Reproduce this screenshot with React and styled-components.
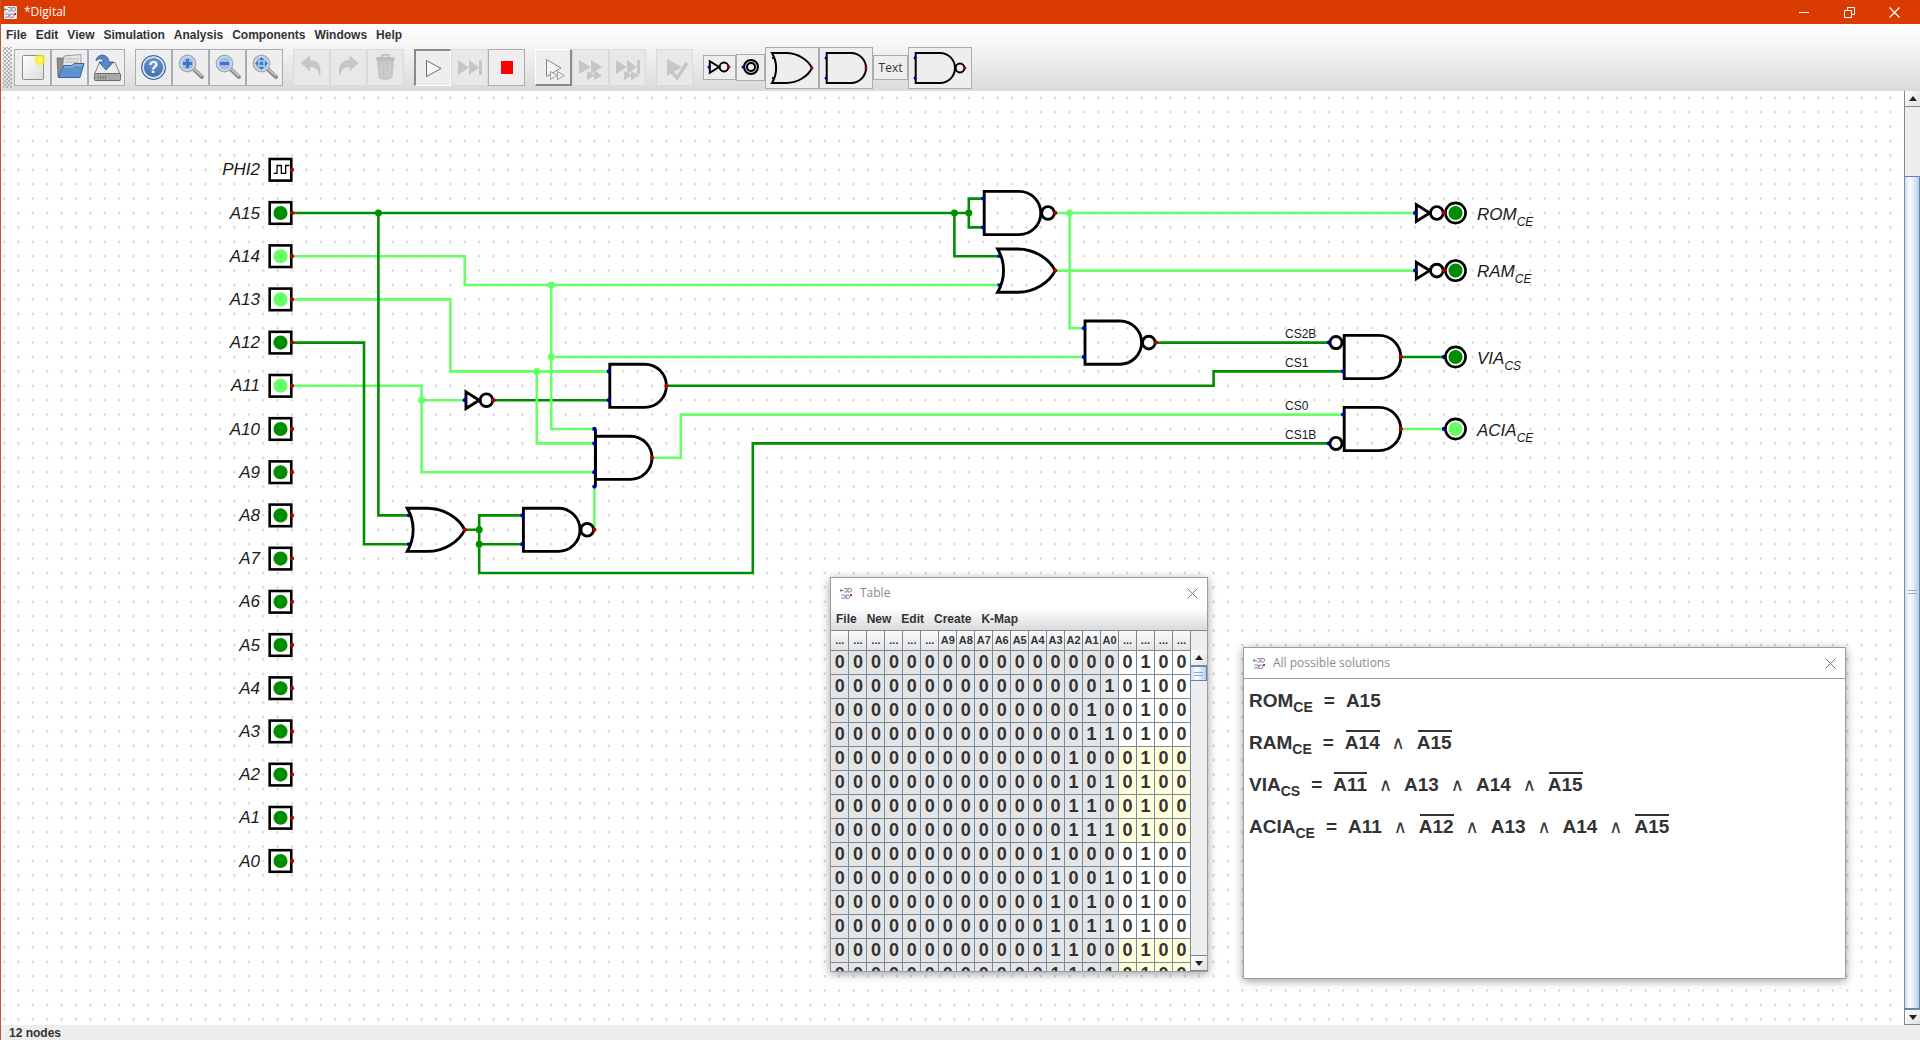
import React from "react";
import styled, { createGlobalStyle, css } from "styled-components";

const SANS = '"Liberation Sans", Arial, sans-serif';
const CAPTION = '"Open Sans", "Noto Sans", sans-serif';
const DARK = "#008e00";
const LIGHT = "#66ff66";

const GlobalStyle = createGlobalStyle`
  *, *::before, *::after { box-sizing: border-box; }
  html, body, #root { height: 100%; }
  body { margin: 0; font-family: ${SANS}; color: #333; overflow: hidden; }
  button { font: inherit; color: inherit; padding: 0; margin: 0; border: 0; background: none; }
`;

const AppFrame = styled.div`
  display: flex;
  flex-direction: column;
  height: 100vh;
  border-left: 1px solid #c4522c;
  background: #eee;
`;

const TitleBar = styled.header`
  display: flex;
  align-items: center;
  flex: none;
  height: 24px;
  padding: 0 3px;
  background: #da3b01;
  color: #fff;
  font: 12px/24px ${CAPTION};
`;

const Title = styled.h1`
  flex: 1;
  margin: 0 0 0 7px;
  font: inherit;
`;

const CaptionButton = styled.button`
  display: grid;
  place-items: center;
  width: 45px;
  height: 24px;
`;

const TopArea = styled.div`
  flex: none;
  height: 67px;
  background: linear-gradient(#ffffff, #f4f4f4 35%, #dadada);
`;

const MenuBar = styled.nav`
  display: flex;
  gap: ${(p) => p.$gap || 9}px;
  height: 22px;
  padding-left: 5px;
  ${(p) =>
    p.$shaded &&
    css`
      background: linear-gradient(#ffffff, #dadada);
    `}
`;

const MenuItem = styled.button`
  font: bold 12px/21px ${SANS};
  color: #333;
`;

const Toolbar = styled.div`
  display: flex;
  align-items: center;
  height: 43px;
  padding-left: 2px;
  gap: 10px;
`;

const Grip = styled.div`
  width: 9px;
  height: 41px;
  margin-right: -8px;
  background-image: radial-gradient(circle, #b4b4b4 1px, transparent 1px),
    radial-gradient(circle, #b4b4b4 1px, transparent 1px);
  background-size: 4px 4px;
  background-position: 0 0, 2px 2px;
`;

const Group = styled.div`
  display: flex;
  align-items: center;
`;

const ToolButton = styled.button`
  display: grid;
  place-items: center;
  width: ${(p) => p.$w || 37}px;
  height: ${(p) => p.$h || 37}px;
  background: #eeeeee;
  border: 1px solid #a9adb2;
  font: 12px/20px ${CAPTION};
  &:disabled {
    border-color: #dadada;
    background: #e8e8e8;
  }
  ${(p) =>
    p.$pressed &&
    css`
      border-color: #8a8a8a #fff #fff #8a8a8a;
      border-width: 2px 1px 1px 2px;
    `}
  ${(p) =>
    p.$raised &&
    css`
      border-color: #fff #8a8a8a #8a8a8a #fff;
      border-width: 1px 2px 2px 1px;
    `}
  svg {
    display: block;
  }
`;

const Workspace = styled.main`
  display: flex;
  flex: 1;
  min-height: 0;
`;

const Canvas = styled.section`
  position: relative;
  flex: 1;
  min-width: 0;
  overflow: hidden;
  background: #fff;
`;

const Drawing = styled.svg`
  display: block;
  width: 100%;
  height: 100%;
`;

const ScrollTrack = styled.div`
  display: flex;
  flex-direction: column;
  flex: none;
  width: 16px;
  border-left: 1px solid #7a8a99;
  background: #eeeeee;
`;

const ScrollButton = styled.button`
  display: grid;
  place-items: center;
  height: 16px;
  background: linear-gradient(135deg, #fff, #e2e2e2);
  border: solid #7a8a99;
  border-width: ${(p) => (p.$down ? "1px 0 1px 0" : "0 0 1px 0")};
`;

const ScrollSpace = styled.div`
  flex: ${(p) => p.$grow || 0};
`;

const Thumb = styled.div`
  display: grid;
  place-items: center;
  flex: ${(p) => (p.$grow ? p.$grow : "0 0 15px")};
  border: 1px solid #6382bf;
  background: linear-gradient(90deg, #c8dcf4, #ffffff 35%, #eaf2fb 55%, #b8cfe5);
  border-left-width: 0;
  &::after {
    content: "";
    width: 9px;
    height: 4px;
    border: solid #8fa8d4;
    border-width: 1px 0;
  }
`;

const StatusBar = styled.footer`
  flex: none;
  height: 15px;
  padding-left: 8px;
  background: #eeeeee;
  font: bold 12px/17px ${SANS};
`;

const FloatWindow = styled.section`
  position: absolute;
  left: ${(p) => p.$x}px;
  top: ${(p) => p.$y}px;
  display: flex;
  flex-direction: column;
  width: ${(p) => p.$w}px;
  height: ${(p) => p.$h}px;
  border: 1px solid #9a9da3;
  background: #fff;
  box-shadow: 0 2px 9px rgba(0, 0, 0, 0.38);
`;

const WindowTitle = styled.header`
  display: flex;
  align-items: center;
  flex: none;
  height: 30px;
  padding: 0 9px;
  gap: 7px;
  color: #8a8a8a;
  h2 {
    flex: 1;
    margin: 0;
    font: 12px/30px ${CAPTION};
  }
`;

const CloseButton = styled.button`
  display: grid;
  place-items: center;
  width: 12px;
  height: 12px;
`;

const TableArea = styled.div`
  display: flex;
  flex: 1;
  min-height: 0;
  overflow: hidden;
  border-top: 1px solid #7a8a99;
`;

const TruthTable = styled.table`
  flex: none;
  align-self: flex-start;
  width: 360px;
  border-collapse: collapse;
  table-layout: fixed;
`;

const HeadCell = styled.th`
  height: 19px;
  padding: 0;
  border-right: 1px solid #7a8a99;
  border-bottom: 1px solid #7a8a99;
  background: linear-gradient(#fafafa, #e4e4e4);
  font: bold 11px/17px ${SANS};
  white-space: nowrap;
`;

const Bit = styled.td`
  height: 24px;
  padding: 0;
  border-right: 1px solid #7a8a99;
  border-bottom: 1px solid #7a8a99;
  background: ${(p) => p.$bg};
  text-align: center;
  font: bold 18px/23px ${SANS};
`;

const TableScroll = styled(ScrollTrack)`
  width: 16px;
  padding-top: 19px;
  border-left: 0;
`;

const Solutions = styled.div`
  display: flex;
  flex-direction: column;
  flex: 1;
  padding: 1px 5px;
  border-top: 1px solid #9a9da3;
`;

const Equation = styled.div`
  display: flex;
  align-items: baseline;
  height: 42px;
  font: bold 19px/42px ${SANS};
  sub {
    position: relative;
    top: 5px;
    vertical-align: baseline;
    font-size: 14px;
    line-height: 1;
  }
`;

const Equals = styled.span`
  padding: 0 11px;
`;

const Term = styled.span`
  position: relative;
  &::before {
    content: "";
    position: absolute;
    left: 1px;
    right: 0;
    top: 8px;
    border-top: ${(p) => (p.$not ? "2px solid #333" : "0")};
  }
`;

const Wedge = styled.span`
  width: 37px;
  text-align: center;
  font: 18px/1 "DejaVu Sans", sans-serif;
`;

/* ---------- circuit symbols, one unit = one grid step ---------- */

const Pin = ({ x, y, out }) => <circle cx={x} cy={y} r={0.15} fill={out ? "#b20000" : "#0000b2"} />;

const Body = ({ children }) => (
  <g fill="none" stroke="#000" strokeWidth={0.2}>
    {children}
  </g>
);

function AndGate({ x, y, inverted, pins = [-1, 1], invertedPin, wide }) {
  return (
    <g transform={`translate(${x} ${y})`}>
      <Body>
        <path d="M0.07 -1.5H2.5A1.5 1.5 0 0 1 2.5 1.5H0.07Z" />
        {wide && <path d="M0.07 -2V2" />}
        {inverted && <circle cx={4.5} cy={0} r={0.44} />}
        {invertedPin && <circle cx={-0.5} cy={invertedPin} r={0.42} />}
      </Body>
      {pins.map((p) => (
        <Pin key={p} x={p === invertedPin ? -1 : 0} y={p} />
      ))}
      <Pin out x={inverted ? 5 : 4} y={0} />
    </g>
  );
}

function OrGate({ x, y }) {
  return (
    <g transform={`translate(${x} ${y})`}>
      <path d="M0 -1H0.3M0 1H0.3" stroke="#0000b2" strokeWidth={0.22} />
      <Body>
        <path d="M0 -1.5H1.4C2.6 -1.5 3.6 -0.8 4 0C3.6 0.8 2.6 1.5 1.4 1.5H0C0.55 0.6 0.55 -0.6 0 -1.5Z" />
      </Body>
      <Pin out x={4} y={0} />
    </g>
  );
}

function NotGate({ x, y }) {
  return (
    <g transform={`translate(${x} ${y})`}>
      <Body>
        <path d="M0.08 -0.58V0.58L1 0Z" />
        <circle cx={1.5} cy={0} r={0.44} />
      </Body>
      <Pin x={0} y={0} />
      <Pin out x={2} y={0} />
    </g>
  );
}

function Source({ y, color }) {
  return (
    <g transform={`translate(0 ${y})`}>
      <rect x={-1.55} y={-0.75} width={1.5} height={1.5} fill="#fff" stroke="#000" strokeWidth={0.18} />
      {color ? (
        <circle cx={-0.8} cy={0} r={0.49} fill={color} />
      ) : (
        <path d="M-1.27 0.25H-1.04V-0.3H-0.74V0.25H-0.44V-0.3H-0.18" fill="none" stroke="#000" strokeWidth={0.09} />
      )}
      <Pin out x={0} y={0} />
    </g>
  );
}

function Lamp({ x, y, color }) {
  return (
    <g>
      <circle cx={x + 0.8} cy={y} r={0.7} fill="#fff" stroke="#000" strokeWidth={0.18} />
      <circle cx={x + 0.8} cy={y} r={0.49} fill={color} />
    </g>
  );
}

const INPUTS = ["PHI2", "A15", "A14", "A13", "A12", "A11", "A10", "A9", "A8", "A7", "A6", "A5", "A4", "A3", "A2", "A1", "A0"];
const HIGH = ["A14", "A13", "A11"];
const OUTPUTS = [
  ["ROM", "CE", 0, DARK],
  ["RAM", "CE", 4, DARK],
  ["VIA", "CS", 10, DARK],
  ["ACIA", "CE", 15, LIGHT],
];
const NET_LABELS = [
  ["CS2B", 9],
  ["CS1", 11],
  ["CS0", 14],
  ["CS1B", 16],
];
const STEP = 14.4;
const ORIGIN_X = 291;
const ORIGIN_Y = 122;
const px = (u) => Math.floor(ORIGIN_X + u * STEP);
const py = (u) => Math.floor(ORIGIN_Y + u * STEP);

const LIGHT_WIRES = "M0 3H12V5H49M0 6H11V11H22M0 12H9V18H21M9 13H12M18 10H55M25 17H27V14H73M21 22V19M53 0H78M53 4H78M54 0V8H55M77 15H80";
const DARK_WIRES = "M0 0H47M46 0V3H49M48 -1H47V1H48M6 0V21H8M0 9H5V23H8M14 13H22M26 12H64V11H73M60 9H72M12 22H13M16 21H13V25H32V16H72M13 23H16M77 10H80";
const TOP_WIRES = "M18 5V15H21M17 11V16H21";
const DOTS = [
  [6, 0, DARK], [46, 0, DARK], [47, 0, DARK], [13, 22, DARK], [13, 23, DARK],
  [18, 5, LIGHT], [18, 10, LIGHT], [17, 11, LIGHT], [9, 13, LIGHT], [54, 0, LIGHT],
];

function Circuit() {
  return (
    <Drawing role="img" aria-label="Address decoder circuit">
      <defs>
        <pattern id="grid" x={ORIGIN_X - STEP / 2} y={ORIGIN_Y - STEP / 2} width={STEP} height={STEP} patternUnits="userSpaceOnUse">
          <circle cx={STEP / 2} cy={STEP / 2} r={1.1} fill="#c8c8c8" />
        </pattern>
      </defs>
      <rect width="100%" height="100%" fill="url(#grid)" />
      <g transform={`translate(${ORIGIN_X} ${ORIGIN_Y}) scale(${STEP})`}>
        <g fill="none" strokeWidth={0.18} strokeLinecap="square">
          <path d={LIGHT_WIRES} stroke={LIGHT} />
          <path d={DARK_WIRES} stroke={DARK} />
          <path d={TOP_WIRES} stroke={LIGHT} />
        </g>
        {DOTS.map(([x, y, c]) => (
          <circle key={`${x},${y}`} cx={x} cy={y} r={0.24} fill={c} />
        ))}
        {INPUTS.map((name, i) => (
          <Source key={name} y={i * 3 - 3} color={i === 0 ? null : HIGH.includes(name) ? LIGHT : DARK} />
        ))}
        <AndGate x={48} y={0} inverted />
        <OrGate x={49} y={4} />
        <AndGate x={55} y={9} inverted />
        <AndGate x={22} y={12} />
        <NotGate x={12} y={13} />
        <AndGate x={21} y={17} pins={[-2, -1, 1, 2]} wide />
        <OrGate x={8} y={22} />
        <AndGate x={16} y={22} inverted />
        <AndGate x={73} y={10} invertedPin={-1} />
        <AndGate x={73} y={15} invertedPin={1} />
        <Pin x={80} y={10} />
        <Pin x={80} y={15} />
        {OUTPUTS.map(([n, , y, c]) => (
          <Lamp key={n} x={80} y={y} color={c} />
        ))}
        <NotGate x={78} y={0} />
        <NotGate x={78} y={4} />
      </g>
      <g fontFamily={SANS} fill="#1a1a1a">
        <g fontSize="17px" fontStyle="italic">
          {INPUTS.map((name, i) => (
            <text key={name} x={259} y={py(i * 3 - 3) + 6} textAnchor="end">
              {name}
            </text>
          ))}
          {OUTPUTS.map(([name, sub, y]) => (
            <text key={name} x={1476} y={py(y) + 7}>
              {name}
              <tspan dy={6} fontSize="12px">
                {sub}
              </tspan>
            </text>
          ))}
        </g>
        <g fontSize="12px">
          {NET_LABELS.map(([name, y]) => (
            <text key={name} x={px(69)} y={py(y) - 4}>
              {name}
            </text>
          ))}
        </g>
      </g>
    </Drawing>
  );
}

/* ---------- icons ---------- */

const Icon = ({ children, label }) => (
  <svg width={35} height={35} viewBox="1 1 35 35" aria-label={label}>
    {children}
  </svg>
);

const AppLogo = ({ plate }) => (
  <svg width={13} height={13} viewBox="0 0 13 13" aria-hidden="true">
    {plate && <rect width={13} height={13} rx={1} fill="#f3eef0" />}
    <g fill="none" stroke="#8f84b4" strokeWidth={1}>
      <path d="M4 1.5H7V5H4M8 1.5H10A1.7 1.7 0 0 1 10 5H8ZM1 8H5V11H1M6 8H8A1.5 1.5 0 0 1 8 11.5H6Z" />
      <path d="M1 3.5H4M5 9.5H6" />
    </g>
    <path d="M0 2.5H2V4.5H0Z" fill="#46a05a" />
    <path d="M10 7H12V9H10Z" fill="#cc2936" />
  </svg>
);

const Magnifier = ({ label, children }) => (
  <Icon label={label}>
    <path d="M22 20.5L30 28" stroke="#8a8a8a" strokeWidth={4} strokeLinecap="round" />
    <path d="M22 20L29.5 26.5" stroke="#cccccc" strokeWidth={1.6} strokeLinecap="round" />
    <circle cx={15.5} cy={14.5} r={8.2} fill="#a8c6e8" stroke="#a3aab0" strokeWidth={1.4} />
    <circle cx={15.5} cy={14.5} r={6.8} fill="#9dbfe6" stroke="#e4eef8" strokeWidth={1} />
    <g fill="#3f76b8" stroke="#3f76b8">{children}</g>
  </Icon>
);

const NewIcon = () => (
  <Icon label="New">
    <defs>
      <linearGradient id="page" x1="0" y1="0" x2="1" y2="1">
        <stop offset="0" stopColor="#ffffff" />
        <stop offset="1" stopColor="#dcdcdc" />
      </linearGradient>
      <radialGradient id="spark">
        <stop offset="0" stopColor="#ffffc8" />
        <stop offset="0.5" stopColor="#f8f020" />
        <stop offset="1" stopColor="#f5ec3c" stopOpacity="0.15" />
      </radialGradient>
    </defs>
    <rect x={8.5} y={6.5} width={21} height={24} rx={1} fill="url(#page)" stroke="#8c8c8c" />
    <circle cx={26} cy={11} r={6.5} fill="url(#spark)" />
  </Icon>
);

const OpenIcon = () => (
  <Icon label="Open">
    <path d="M7 28L6 9H13L15 7H25V26Z" fill="#8b8d8a" stroke="#666" strokeWidth={0.8} />
    <path d="M11 22L13 7L30 5.5V20Z" fill="#e6e6e6" stroke="#8a8a8a" strokeWidth={0.8} />
    <path d="M14 10H28M14 13H28" stroke="#b5b5b5" />
    <path d="M7.5 28.5L12.5 16.5H21L23 14.5H33L29 28.5Z" fill="#5d92cd" stroke="#3465a4" />
    <path d="M13.5 18H21.5L23.5 16H31.5" fill="none" stroke="#a6c6ea" />
  </Icon>
);

const SaveIcon = () => (
  <Icon label="Save">
    <path d="M11.5 13.5H27L32 25H6.5Z" fill="#ececea" stroke="#808080" />
    <rect x={6.5} y={24.5} width={26} height={7} rx={1} fill="#a9aaa8" stroke="#6b6b6b" />
    <path d="M10 27V30M12.5 27V30M15 27V30M17.5 27V30" stroke="#6f6f6f" />
    <path d="M8 12C9 4 20 4 21 13H25.5L18 21L11 13H15.5C15 9 11 8.5 8 12Z" fill="#5588c4" stroke="#2f5f9e" strokeWidth={0.9} />
  </Icon>
);

const HelpMark = styled.span`
  display: grid;
  place-items: center;
  width: 25px;
  height: 25px;
  border-radius: 50%;
  border: 1px solid #2c5590;
  background: radial-gradient(circle at 50% 30%, #6b9ad0, #2c5f9f);
  box-shadow: inset 0 0 0 2px #cfe0f2;
  color: #fff;
  font: bold 16px/23px ${SANS};
`;

const grey = "#c6c6c6";

const UndoArrow = () => <path d="M8 14L17 6.5V11C25 11 29 16 27 28C25.5 21 23 18 17 18V22.5Z" fill={grey} />;

const TrashIcon = () => (
  <Icon label="Delete">
    <path d="M10 12H27L25.5 29Q18.5 33 11.5 29Z" fill={grey} />
    <path d="M14 15L15 28M18.5 15V29M23 15L22 28" stroke="#d4d4d4" strokeWidth={1} />
    <rect x={9} y={8} width={19} height={4} rx={2} fill="#bdbdbd" />
    <path d="M15 8V6H22V8" fill="none" stroke={grey} strokeWidth={2} />
  </Icon>
);

const MiniPair = ({ fill = "#f2f2f2", stroke = "#a0a0a0" }) => (
  <path d="M15.5 22.5L22 26.5L15.5 30.5ZM22.5 22.5L29.5 26.5L22.5 30.5Z" fill={fill} stroke={stroke} />
);

function Caption() {
  return (
    <>
      <CaptionButton aria-label="Minimize">
        <svg width={11} height={11}><path d="M0 5.5H10" stroke="#fff" /></svg>
      </CaptionButton>
      <CaptionButton aria-label="Restore">
        <svg width={11} height={11} fill="none" stroke="#fff">
          <path d="M0.5 3.5H7.5V10.5H0.5ZM3.5 3V0.5H10.5V7.5H8" />
        </svg>
      </CaptionButton>
      <CaptionButton aria-label="Close">
        <svg width={11} height={11} stroke="#fff" strokeWidth={1.2}><path d="M0.5 0.5L10.5 10.5M10.5 0.5L0.5 10.5" /></svg>
      </CaptionButton>
    </>
  );
}

const Arrow = ({ down }) => (
  <svg width={8} height={5} aria-hidden="true">
    <path d={down ? "M0 0H8L4 5Z" : "M0 5H8L4 0Z"} fill="#222" />
  </svg>
);

function WindowHeader({ title }) {
  return (
    <WindowTitle>
      <AppLogo />
      <h2>{title}</h2>
      <CloseButton aria-label={`Close ${title}`}>
        <svg width={11} height={11} stroke="#777"><path d="M0.5 0.5L10.5 10.5M10.5 0.5L0.5 10.5" /></svg>
      </CloseButton>
    </WindowTitle>
  );
}

const PartIcon = ({ w, h, x, y, children }) => (
  <svg width={w - 2} height={h - 2} aria-hidden="true">
    <g transform={`translate(${x - 1} ${y - 1}) scale(10)`}>{children}</g>
  </svg>
);

function Tools() {
  return (
    <Toolbar role="toolbar" aria-label="Tools">
      <Grip />
      <Group>
        <ToolButton><NewIcon /></ToolButton>
        <ToolButton><OpenIcon /></ToolButton>
        <ToolButton><SaveIcon /></ToolButton>
      </Group>
      <Group>
        <ToolButton aria-label="Help"><HelpMark>?</HelpMark></ToolButton>
        <ToolButton>
          <Magnifier label="Zoom in"><path d="M11 14.5H20M15.5 10V19" strokeWidth={3} /></Magnifier>
        </ToolButton>
        <ToolButton>
          <Magnifier label="Zoom out"><path d="M11 14.5H20" strokeWidth={3} /></Magnifier>
        </ToolButton>
        <ToolButton>
          <Magnifier label="Fit to window">
            <path d="M15.5 8L18 11H13ZM15.5 21L18 18H13ZM9 14.5L12 12V17ZM22 14.5L19 12V17ZM14 13H17V16H14Z" stroke="none" />
          </Magnifier>
        </ToolButton>
      </Group>
      <Group>
        <ToolButton disabled><Icon label="Undo"><UndoArrow /></Icon></ToolButton>
        <ToolButton disabled><Icon label="Redo"><g transform="translate(36.5 0) scale(-1 1)"><UndoArrow /></g></Icon></ToolButton>
        <ToolButton disabled><TrashIcon /></ToolButton>
      </Group>
      <Group>
        <ToolButton $pressed>
          <svg width={33} height={33} viewBox="2 2 33 33" aria-label="Run"><path d="M11.5 10.5L26 18.5L11.5 26.5Z" fill="#f6f6f6" stroke="#6e6e6e" /></svg>
        </ToolButton>
        <ToolButton disabled>
          <Icon label="Fast run"><path d="M7 11L18 18.5L7 26ZM18 11L28 18.5L18 26ZM28 11.5H31V26H28Z" fill={grey} /></Icon>
        </ToolButton>
        <ToolButton><Icon label="Stop"><rect x={13} y={12} width={12} height={13} fill="#ff0000" /></Icon></ToolButton>
      </Group>
      <Group>
        <ToolButton $raised>
          <svg width={34} height={34} viewBox="1 1 34 34" aria-label="Step">
            <path d="M11.5 10.5L26 19L11.5 27.5Z" fill="#f2f2f2" stroke="#8a8a8a" />
            <MiniPair />
          </svg>
        </ToolButton>
        <ToolButton disabled>
          <Icon label="Run to break">
            <path d="M7 11L19 18L7 25ZM19 11L30 18L19 25Z" fill={grey} />
            <MiniPair fill={grey} stroke={grey} />
          </Icon>
        </ToolButton>
        <ToolButton disabled>
          <Icon label="Fast step">
            <path d="M7 11L18 18L7 25ZM18 11L28 18L18 25ZM28 11H31V25H28Z" fill={grey} />
            <MiniPair fill={grey} stroke={grey} />
          </Icon>
        </ToolButton>
      </Group>
      <Group>
        <ToolButton disabled>
          <Icon label="Run tests">
            <path d="M11 10L26 18L11 27Z" fill={grey} />
            <path d="M16 23L21 29L31 14" fill="none" stroke={grey} strokeWidth={3.5} />
          </Icon>
        </ToolButton>
      </Group>
      <Group>
        <ToolButton $w={33} $h={25} aria-label="Not"><PartIcon w={33} h={25} x={6} y={12}><NotGate x={0} y={0} /></PartIcon></ToolButton>
        <ToolButton $w={29} $h={27} aria-label="Output">
          <PartIcon w={29} h={27} x={15} y={13}>
            <circle r={0.7} fill="#c8c8c8" stroke="#000" strokeWidth={0.2} />
            <circle r={0.4} fill="#eee" stroke="#000" strokeWidth={0.2} />
            <Pin x={-0.8} y={0} />
          </PartIcon>
        </ToolButton>
        <ToolButton $w={54} $h={42} aria-label="Or"><PartIcon w={54} h={42} x={7} y={21}><OrGate x={0} y={0} /></PartIcon></ToolButton>
        <ToolButton $w={54} $h={42} aria-label="And"><PartIcon w={54} h={42} x={7} y={21}><AndGate x={0} y={0} /></PartIcon></ToolButton>
        <ToolButton $w={35} $h={25}>Text</ToolButton>
        <ToolButton $w={64} $h={42} aria-label="NAnd"><PartIcon w={64} h={42} x={7} y={21}><AndGate x={0} y={0} inverted /></PartIcon></ToolButton>
      </Group>
    </Toolbar>
  );
}

const HEADERS = ["...", "...", "...", "...", "...", "...", "A9", "A8", "A7", "A6", "A5", "A4", "A3", "A2", "A1", "A0", "...", "...", "...", "..."];
const ROWS = Array.from({ length: 14 }, (_, n) => n.toString(2).padStart(16, "0") + "0100");

function bitColor(row, col) {
  if (col < 16) return "#e4e5e7";
  return Math.floor(row / 4) % 2 ? "#ffffdc" : "#ffffff";
}

function TableWindow() {
  return (
    <FloatWindow $x={829} $y={486} $w={378} $h={395}>
      <WindowHeader title="Table" />
      <MenuBar $shaded $gap={10} aria-label="Table menu">
        {["File", "New", "Edit", "Create", "K-Map"].map((m) => (
          <MenuItem key={m}>{m}</MenuItem>
        ))}
      </MenuBar>
      <TableArea>
        <TruthTable>
          <thead>
            <tr>
              {HEADERS.map((h, i) => (
                <HeadCell key={i} scope="col">{h}</HeadCell>
              ))}
            </tr>
          </thead>
          <tbody>
            {ROWS.map((bits, r) => (
              <tr key={r}>
                {[...bits].map((b, c) => (
                  <Bit key={c} $bg={bitColor(r, c)}>{b}</Bit>
                ))}
              </tr>
            ))}
          </tbody>
        </TruthTable>
        <TableScroll>
          <ScrollButton aria-label="Scroll up"><Arrow /></ScrollButton>
          <Thumb />
          <ScrollSpace $grow={1} />
          <ScrollButton $down aria-label="Scroll down"><Arrow down /></ScrollButton>
        </TableScroll>
      </TableArea>
    </FloatWindow>
  );
}

const EQUATIONS = [
  ["ROM", "CE", ["A15"]],
  ["RAM", "CE", ["!A14", "!A15"]],
  ["VIA", "CS", ["!A11", "A13", "A14", "!A15"]],
  ["ACIA", "CE", ["A11", "!A12", "A13", "A14", "!A15"]],
];

function SolutionsWindow() {
  return (
    <FloatWindow $x={1242} $y={556} $w={603} $h={332}>
      <WindowHeader title="All possible solutions" />
      <Solutions>
        {EQUATIONS.map(([name, sub, terms]) => (
          <Equation key={name}>
            <span>{name}<sub>{sub}</sub></span>
            <Equals>=</Equals>
            {terms.map((t, i) => (
              <React.Fragment key={t}>
                {i > 0 && <Wedge>∧</Wedge>}
                <Term $not={t[0] === "!"}>{t.replace("!", "")}</Term>
              </React.Fragment>
            ))}
          </Equation>
        ))}
      </Solutions>
    </FloatWindow>
  );
}

export default function App() {
  return (
    <>
      <GlobalStyle />
      <AppFrame>
        <TitleBar>
          <AppLogo plate />
          <Title>*Digital</Title>
          <Caption />
        </TitleBar>
        <TopArea>
          <MenuBar aria-label="Main menu">
            {["File", "Edit", "View", "Simulation", "Analysis", "Components", "Windows", "Help"].map((m) => (
              <MenuItem key={m}>{m}</MenuItem>
            ))}
          </MenuBar>
          <Tools />
        </TopArea>
        <Workspace>
          <Canvas>
            <Circuit />
            <TableWindow />
            <SolutionsWindow />
          </Canvas>
          <ScrollTrack>
            <ScrollButton aria-label="Scroll up"><Arrow /></ScrollButton>
            <ScrollSpace $grow={69} />
            <Thumb $grow={832} />
            <ScrollButton $down aria-label="Scroll down"><Arrow down /></ScrollButton>
          </ScrollTrack>
        </Workspace>
        <StatusBar>12 nodes</StatusBar>
      </AppFrame>
    </>
  );
}
